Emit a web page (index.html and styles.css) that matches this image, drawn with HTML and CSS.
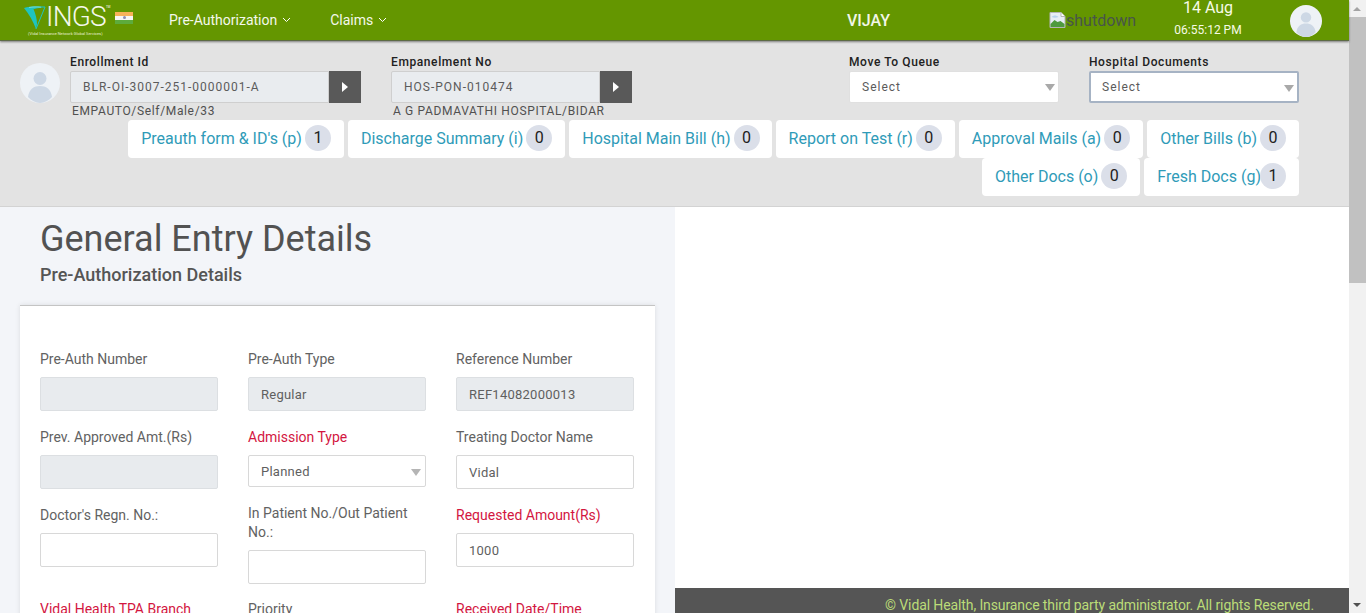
FILE: index.html
```html
<!DOCTYPE html>
<html lang="en">
<head>
  <meta charset="UTF-8" />
  <title>VINGS - General Entry Details</title>
  <link rel="stylesheet" href="styles.css">
</head>
<body>
  <div class="page">
    <div class="content">

      <!-- Top bar -->
      <header class="topbar">
        <div class="logo">
          <svg class="logo-v" width="26" height="28" viewBox="0 0 26 28">
            <path d="M2 4 C8 2 17 2 23 3 C18 3 14 3.500 11.500 5 C13.500 10 15 15 15 20 L14 25 C11 17 7 10 2 4 Z" fill="#1fc4c0"/>
            <path d="M12 4.500 C16 3.500 20 3 23 3 C20 10 17 18 14 25" fill="none" stroke="#1fc4c0" stroke-width="1"/>
            <path d="M7 3.500 C11 2.800 15 2.800 19 3.200" fill="none" stroke="#cfeee0" stroke-width="0.500"/>
          </svg>
          <span class="logo-text">INGS</span>
          <span class="logo-tm">TM</span>
          <span class="logo-tag">(Vidal Insurance Network Global Services)</span>
        </div>
        <div class="flag">
          <span class="flag-o"></span>
          <span class="flag-w"><i></i></span>
          <span class="flag-g"></span>
        </div>
        <nav class="nav">
          <a class="nav-item nav-pre">Pre-Authorization
            <svg width="9" height="6" viewBox="0 0 9 6"><path d="M1 1l3.500 3.500L8 1" fill="none" stroke="#fff" stroke-width="1"/></svg>
          </a>
          <a class="nav-item">Claims
            <svg width="9" height="6" viewBox="0 0 9 6"><path d="M1 1l3.500 3.500L8 1" fill="none" stroke="#fff" stroke-width="1"/></svg>
          </a>
        </nav>
        <div class="user-name">VIJAY</div>
        <div class="shutdown">
          <svg width="17" height="16" viewBox="0 0 16 16">
            <path d="M.5.5h11l4 4v11H.5z" fill="#e8eef5" stroke="#b5b5b5"/>
            <path d="M11.500.5v4h4" fill="#fff" stroke="#b5b5b5"/>
            <path d="M1 15v-3l4-4 3 2 3-1 4 3v3z" fill="#4f9a3e"/>
            <path d="M2 5c2-2 5-2 7 0-2 1-5 1-7 0z" fill="#b9d3ee"/>
          </svg>
          <span>shutdown</span>
        </div>
        <div class="clock">
          <div class="clock-date">14 Aug</div>
          <div class="clock-time">06:55:12 PM</div>
        </div>
        <svg class="avatar avatar-top" width="32" height="32" viewBox="0 0 40 40">
          <circle cx="20" cy="20" r="20" fill="#eef2f6"/>
          <circle cx="20" cy="15.500" r="6.500" fill="#cdd8e5"/>
          <path d="M8 34c1-8 6-11 12-11s11 3 12 11c-3.500 3.500-7.500 6-12 6s-8.500-2.500-12-6z" fill="#cdd8e5"/>
        </svg>
      </header>

      <!-- Enrollment / hospital strip -->
      <section class="strip">
        <div class="strip-row">
          <svg class="avatar avatar-strip" width="40" height="40" viewBox="0 0 40 40">
            <circle cx="20" cy="20" r="20" fill="#eef2f6"/>
            <circle cx="20" cy="15.500" r="6.500" fill="#cdd8e5"/>
            <path d="M8 34c1-8 6-11 12-11s11 3 12 11c-3.500 3.500-7.500 6-12 6s-8.500-2.500-12-6z" fill="#cdd8e5"/>
          </svg>
          <div class="id-field id-enroll">
            <div class="strip-label">Enrollment Id</div>
            <div class="id-box">
              <div class="id-value">BLR-OI-3007-251-0000001-A</div>
              <div class="id-btn"><span></span></div>
            </div>
            <div class="id-note">EMPAUTO/Self/Male/33</div>
          </div>
          <div class="id-field id-empanel">
            <div class="strip-label">Empanelment No</div>
            <div class="id-box">
              <div class="id-value">HOS-PON-010474</div>
              <div class="id-btn"><span></span></div>
            </div>
            <div class="id-note">A G PADMAVATHI HOSPITAL/BIDAR</div>
          </div>
          <div class="sel-field sel-first">
            <div class="strip-label">Move To Queue</div>
            <div class="strip-select">Select<span class="caret"></span></div>
          </div>
          <div class="sel-field">
            <div class="strip-label">Hospital Documents</div>
            <div class="strip-select is-focus">Select<span class="caret"></span></div>
          </div>
        </div>

        <div class="tabs">
          <a class="tab">Preauth form &amp; ID's (p)<span class="badge">1</span></a>
          <a class="tab">Discharge Summary (i)<span class="badge">0</span></a>
          <a class="tab tab-narrow">Hospital Main Bill (h)<span class="badge">0</span></a>
          <a class="tab">Report on Test (r)<span class="badge">0</span></a>
          <a class="tab">Approval Mails (a)<span class="badge">0</span></a>
          <a class="tab">Other Bills (b)<span class="badge">0</span></a>
          <a class="tab">Other Docs (o)<span class="badge">0</span></a>
          <a class="tab tab-tight">Fresh Docs (g)<span class="badge">1</span></a>
        </div>
      </section>

      <div class="split">
        <!-- Left: form -->
        <main class="left">
          <h1>General Entry Details</h1>
          <h2>Pre-Authorization Details</h2>
          <div class="card">
            <div class="form-grid">
              <div class="field">
                <label>Pre-Auth Number</label>
                <div class="input is-disabled"></div>
              </div>
              <div class="field">
                <label>Pre-Auth Type</label>
                <div class="input is-disabled">Regular</div>
              </div>
              <div class="field">
                <label>Reference Number</label>
                <div class="input is-disabled">REF14082000013</div>
              </div>

              <div class="field">
                <label>Prev. Approved Amt.(Rs)</label>
                <div class="input is-disabled"></div>
              </div>
              <div class="field">
                <label class="req">Admission Type</label>
                <div class="input is-select">Planned<span class="caret"></span></div>
              </div>
              <div class="field">
                <label>Treating Doctor Name</label>
                <div class="input">Vidal</div>
              </div>

              <div class="field">
                <label>Doctor's Regn. No.:</label>
                <div class="input"></div>
              </div>
              <div class="field field-tall">
                <label>In Patient No./Out Patient No.:</label>
                <div class="input"></div>
              </div>
              <div class="field">
                <label class="req">Requested Amount(Rs)</label>
                <div class="input">1000</div>
              </div>

              <div class="field">
                <label class="req">Vidal Health TPA Branch</label>
              </div>
              <div class="field">
                <label>Priority</label>
              </div>
              <div class="field">
                <label class="req">Received Date/Time</label>
              </div>
            </div>
          </div>
        </main>

        <!-- Right: document preview -->
        <aside class="right">
          <footer class="footer">© Vidal Health, Insurance third party administrator. All rights Reserved.</footer>
        </aside>
      </div>
    </div>

    <!-- Window scrollbar -->
    <div class="scrollbar">
      <span class="arrow-up"></span>
      <span class="thumb"></span>
      <span class="arrow-down"></span>
    </div>
  </div>
</body>
</html>
```

FILE: styles.css
```css
* {
  box-sizing: border-box;
}

html, body {
  height: 100%;
  margin: 0;
  overflow: hidden;
}

body {
  font-family: 'Roboto', sans-serif;
  font-size: 14px;
  color: #555;
  background-color: #fff;
}

.page {
  display: flex;
  height: 613px;
}

.content {
  flex: 1;
  min-width: 0;
  display: flex;
  flex-direction: column;
}

/* top bar */
.topbar {
  flex: none;
  position: relative;
  z-index: 2;
  display: flex;
  align-items: center;
  height: 41px;
  background-color: #649600;
  border-bottom: 1px solid #5d6b45;
  box-shadow: 0 1px 2px rgba(0, 0, 0, 0.45);
  color: #fff;
}

.logo {
  position: relative;
  width: 115px;
  height: 40px;
  flex: none;
}

.logo-v {
  position: absolute;
  left: 22px;
  top: 4px;
}

.logo-text {
  position: absolute;
  left: 46px;
  top: 3px;
  font-size: 28px;
  line-height: 28px;
  font-weight: 300;
  letter-spacing: -0.8px;
  color: #f4f8ec;
}

.logo-tm {
  position: absolute;
  left: 106px;
  top: 5px;
  font-size: 3px;
  line-height: 4px;
}

.logo-tag {
  position: absolute;
  left: 28px;
  top: 31px;
  font-size: 4px;
  line-height: 5px;
  white-space: nowrap;
  color: #e6efd3;
}

.flag {
  flex: none;
  display: flex;
  flex-direction: column;
  width: 18px;
  height: 13px;
  margin-top: -4px;
}

.flag span {
  flex: 1;
}

.flag-o {
  background-color: #f7b25a;
}

.flag-w {
  display: flex;
  align-items: center;
  justify-content: center;
  background-color: #f6f6f6;
}

.flag-w i {
  width: 3px;
  height: 3px;
  border-radius: 50%;
  background-color: #8c8cb4;
}

.flag-g {
  background-color: #5dab3c;
}

.nav {
  display: flex;
  align-items: center;
  margin-left: 36px;
  width: 649px;
  flex: none;
}

.nav-item {
  display: flex;
  align-items: center;
  gap: 5px;
  font-size: 14px;
  color: #f4f8ec;
}

.nav-pre {
  margin-right: 39px;
}

.user-name {
  width: 29px;
  flex: none;
  margin-left: 29px;
  font-size: 16px;
  font-weight: 500;
  white-space: nowrap;
  color: #f2f6e8;
}

.shutdown {
  flex: none;
  display: flex;
  align-items: center;
  margin-left: 173px;
  width: 109px;
  font-size: 16px;
  color: #48554a;
}

.clock {
  flex: none;
  width: 100px;
  margin-top: -4px;
  text-align: center;
  color: #f7fbe6;
}

.clock-date {
  font-size: 16px;
  line-height: 18px;
}

.clock-time {
  font-size: 12px;
  line-height: 14px;
  margin-top: 6px;
}

.avatar {
  flex: none;
  display: block;
}

.avatar-top {
  margin-left: 32px;
  margin-top: 1px;
}

/* strip under the bar */
.strip {
  flex: none;
  height: 166px;
  background-color: #e3e3e3;
  border-bottom: 1px solid #d3d3d3;
  padding: 13px 50px 0 20px;
}

.strip-row {
  display: flex;
  height: 66px;
}

.avatar-strip {
  margin: 9px 10px 0 0;
}

.strip-label {
  height: 16px;
  font-size: 12px;
  line-height: 16px;
  font-weight: 500;
  letter-spacing: 0.6px;
  color: #212121;
  white-space: nowrap;
}

.id-enroll {
  width: 291px;
  margin-right: 30px;
}

.id-empanel {
  width: 241px;
}

.id-box {
  display: flex;
  height: 33px;
  margin-top: 1px;
}

.id-value {
  flex: 1;
  height: 32px;
  padding-left: 12px;
  font-size: 12px;
  line-height: 30px;
  letter-spacing: 1px;
  background-color: #e9ecef;
  border: 1px solid #cfcfcf;
  border-radius: 2px 0 0 2px;
  color: #5b5b5b;
  white-space: nowrap;
}

.id-btn {
  flex: none;
  display: flex;
  align-items: center;
  justify-content: center;
  width: 32px;
  height: 32px;
  background-color: #595959;
}

.id-btn span {
  width: 0;
  height: 0;
  border-left: 6px solid #fff;
  border-top: 5px solid transparent;
  border-bottom: 5px solid transparent;
}

.id-note {
  margin: 0 0 0 2px;
  font-size: 12px;
  line-height: 15px;
  letter-spacing: 0.65px;
  color: #505050;
  white-space: nowrap;
}

.sel-field {
  width: 210px;
  margin-left: 30px;
}

.sel-first {
  margin-left: auto;
}

.strip-select {
  position: relative;
  height: 32px;
  margin-top: 1px;
  padding-left: 12px;
  font-size: 12px;
  line-height: 30px;
  letter-spacing: 1px;
  background-color: #fff;
  border: 1px solid #e0e0e0;
  border-radius: 2px;
  color: #5b5b5b;
}

.strip-select.is-focus {
  border: 2px solid #a6b3c4;
  line-height: 28px;
  padding-left: 11px;
}

.caret {
  position: absolute;
  right: 3px;
  top: 12px;
  width: 0;
  height: 0;
  border-top: 7px solid #a9a9a9;
  border-left: 5px solid transparent;
  border-right: 5px solid transparent;
}

.tabs {
  display: flex;
  flex-wrap: wrap;
  justify-content: flex-end;
  column-gap: 4px;
}

.tab {
  display: flex;
  align-items: center;
  height: 38px;
  padding: 0 13px 2px;
  background-color: #fff;
  border-radius: 4px;
  font-size: 16px;
  color: #2f9bb8;
  white-space: nowrap;
}

.tab-narrow {
  padding-right: 12px;
}

.badge {
  display: block;
  width: 26px;
  height: 26px;
  margin-left: 3px;
  border-radius: 50%;
  background-color: #dbdfe9;
  color: #212121;
  line-height: 26px;
  text-align: center;
}

.tab-tight .badge {
  margin-left: -1px;
}

/* split area */
.split {
  flex: 1;
  min-height: 0;
  display: flex;
}

.left {
  flex: none;
  width: 675px;
  padding: 0 20px;
  background-color: #f3f5f9;
  overflow: hidden;
}

h1 {
  margin: 12px 0 0 20px;
  font-size: 36px;
  line-height: 40px;
  font-weight: 400;
  color: #525252;
}

h2 {
  margin: 5px 0 0 20px;
  font-size: 18px;
  line-height: 22px;
  font-weight: 500;
  color: #555;
}

.card {
  margin-top: 19px;
  padding: 44px 21px 0 20px;
  background-color: #fff;
  border-top: 1px solid #c4c4c4;
  box-shadow: 0 0 5px rgba(0, 0, 0, 0.1);
  height: 400px;
}

.form-grid {
  display: grid;
  grid-template-columns: repeat(3, 178px);
  column-gap: 30px;
  row-gap: 17px;
}

.field label {
  display: block;
  margin-bottom: 8px;
  font-size: 14px;
  line-height: 19px;
  color: #626262;
}

.field label.req {
  color: #d3163f;
}

.field-tall {
  margin-top: -2px;
  margin-bottom: -1px;
}

.input {
  position: relative;
  height: 34px;
  padding-left: 12px;
  font-size: 13px;
  line-height: 34px;
  letter-spacing: 0.25px;
  background-color: #fff;
  border: 1px solid #d8d8d8;
  border-radius: 2px;
  color: #5f5f5f;
}

.input.is-disabled {
  background-color: #e8ebee;
  border-color: #dcdfe2;
}

.input.is-select {
  height: 32px;
  line-height: 32px;
}

.input.is-select .caret {
  top: 13px;
  right: 4px;
  border-top-color: #b5b5b5;
}

.right {
  flex: 1;
  display: flex;
  flex-direction: column;
  justify-content: flex-end;
  background-color: #fff;
}

.footer {
  height: 25px;
  padding: 7px 35px 0 0;
  font-size: 14px;
  line-height: 20px;
  letter-spacing: -0.11px;
  text-align: right;
  background-color: #555;
  color: #bbdc78;
  white-space: nowrap;
  overflow: hidden;
}

/* window scrollbar */
.scrollbar {
  flex: none;
  position: relative;
  width: 17px;
  background-color: #f1f1f1;
}

.thumb {
  position: absolute;
  left: 0;
  right: 0;
  top: 17px;
  height: 266px;
  background-color: #c1c1c1;
}

.arrow-up,
.arrow-down {
  position: absolute;
  left: 4px;
  width: 0;
  height: 0;
  border-left: 4px solid transparent;
  border-right: 4px solid transparent;
}

.arrow-up {
  top: 7px;
  border-bottom: 4px solid #a3a3a3;
}

.arrow-down {
  bottom: 6px;
  border-top: 4px solid #505050;
}
```
